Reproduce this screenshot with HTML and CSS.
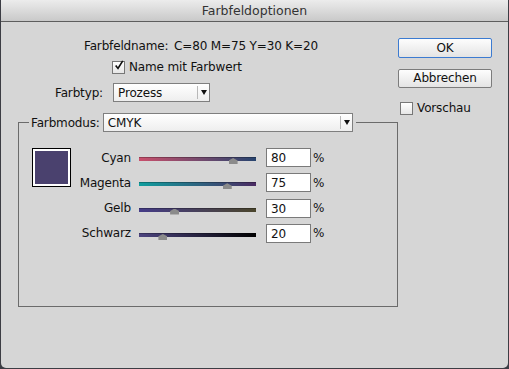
FILE: index.html
```html
<!DOCTYPE html>
<html lang="de">
<head>
    <meta charset="UTF-8">
    <title>Farbfeldoptionen</title>
    <link rel="stylesheet" href="styles.css">
</head>
<body>
    <div class="window">
        <div class="titlebar">Farbfeldoptionen</div>
        <div class="content">
            <div class="main">
                <div class="swatch-name">Farbfeldname: <span class="name-value">C=80 M=75 Y=30 K=20</span></div>
                <div class="check-row">
                    <span class="checkbox">
                        <svg width="12" height="13" viewBox="0 0 12 13"><path d="M2 6.5 L4.8 10 L10.5 1" fill="none" stroke="#111" stroke-width="2"/></svg>
                    </span>
                    Name mit Farbwert
                </div>
                <div class="type-row">
                    <span class="type-label">Farbtyp:</span>
                    <div class="select select-type">
                        <span class="select-text">Prozess</span>
                        <span class="select-arrow"></span>
                    </div>
                </div>
                <fieldset class="mode-group">
                    <legend class="mode-legend">
                        <span>Farbmodus:</span>
                        <div class="select select-mode">
                            <span class="select-text">CMYK</span>
                            <span class="select-arrow"></span>
                        </div>
                    </legend>
                    <div class="mode-body">
                        <div class="color-swatch"></div>
                        <div class="channels">
                            <span class="channel-label">Cyan</span>
                            <div class="track track-cyan"><span class="thumb" style="left: 80%"></span></div>
                            <div class="value">80</div>
                            <span class="unit">%</span>

                            <span class="channel-label">Magenta</span>
                            <div class="track track-magenta"><span class="thumb" style="left: 75%"></span></div>
                            <div class="value">75</div>
                            <span class="unit">%</span>

                            <span class="channel-label">Gelb</span>
                            <div class="track track-gelb"><span class="thumb" style="left: 30%"></span></div>
                            <div class="value">30</div>
                            <span class="unit">%</span>

                            <span class="channel-label">Schwarz</span>
                            <div class="track track-schwarz"><span class="thumb" style="left: 20%"></span></div>
                            <div class="value">20</div>
                            <span class="unit">%</span>
                        </div>
                    </div>
                </fieldset>
            </div>
            <div class="side">
                <div class="btn btn-default">OK</div>
                <div class="btn">Abbrechen</div>
                <div class="check-row preview-row">
                    <span class="checkbox"></span>
                    Vorschau
                </div>
            </div>
        </div>
    </div>
</body>
</html>
```

FILE: styles.css
```css
body {
    margin: 0;
    background: #3c3d44;
    font-family: "DejaVu Sans", sans-serif;
    font-size: 12px;
    letter-spacing: -0.15px;
    color: #111;
}

.window {
    width: 507px;
    height: 368px;
    margin-left: 1px;
    background: #d6d6d6;
    border-radius: 0 0 5px 5px;
    overflow: hidden;
}

.titlebar {
    height: 21px;
    line-height: 22px;
    text-align: center;
    font-size: 12.5px;
    letter-spacing: 0;
    color: #333;
    background: linear-gradient(#ececec, #c9c9c9);
    border-bottom: 1px solid #5e5e5e;
}

.content {
    display: flex;
}

.main {
    width: 397px;
    padding-top: 17px;
}

.swatch-name {
    padding-left: 83px;
    line-height: 14px;
}

.name-value {
    margin-left: 2px;
}

.check-row {
    display: flex;
    align-items: center;
    gap: 4px;
    margin-top: 7px;
    padding-left: 111px;
    line-height: 14px;
}

.checkbox {
    width: 11px;
    height: 11px;
    border: 1px solid #777;
    background: linear-gradient(#fff, #e6e6e6);
    display: flex;
    align-items: center;
    justify-content: center;
}

.checkbox svg {
    margin-top: -3px;
    margin-left: 1px;
}

.type-row {
    display: flex;
    align-items: center;
    margin-top: 9px;
}

.type-label {
    width: 102px;
    text-align: right;
    margin-right: 10px;
}

.select {
    display: flex;
    align-items: center;
    height: 17px;
    border: 1px solid #7f7f7f;
    background: linear-gradient(#fff, #eeeeee);
    box-sizing: content-box;
}

.select-type {
    width: 95px;
}

.select-mode {
    width: 248px;
    margin-left: 3px;
}

.select-text {
    flex: 1;
    padding-left: 4px;
}

.select-arrow {
    width: 11px;
    height: 13px;
    border-left: 1px solid #b8b8b8;
    display: flex;
    align-items: center;
    justify-content: center;
}

.select-arrow::after {
    content: "";
    border-left: 3.5px solid transparent;
    border-right: 3.5px solid transparent;
    border-top: 5px solid #111;
    margin-left: 1px;
}

.mode-group {
    margin: 11px 0 0 17px;
    padding: 0;
    width: 378px;
    height: 192px;
    border: 1px solid #6b6b6b;
    box-sizing: content-box;
}

.mode-legend {
    display: flex;
    align-items: center;
    margin-left: 10px;
    padding: 0 3px 0 2px;
}

.mode-body {
    display: flex;
    align-items: flex-start;
    padding: 16px 0 0 13px;
}

.color-swatch {
    width: 39px;
    height: 39px;
    box-sizing: border-box;
    background: #4a416e;
    border: 1px solid #000;
    box-shadow: inset 0 0 0 2px #fff;
}

.channels {
    display: grid;
    grid-template-columns: 60px 117px 45px auto;
    grid-auto-rows: 19px;
    row-gap: 6.3px;
    column-gap: 8px;
    align-items: center;
}

.channel-label {
    text-align: right;
}

.track {
    position: relative;
    width: 117px;
    height: 4px;
    margin-top: 3px;
    box-shadow: inset 0 1px 0 rgba(0, 0, 0, 0.25);
}

.track-cyan {
    background: linear-gradient(to right, #c9506c, #27446f);
}

.track-magenta {
    background: linear-gradient(to right, #0f9e9e, #4b2a62);
}

.track-gelb {
    background: linear-gradient(to right, #453c88, #4a452c);
}

.track-schwarz {
    background: linear-gradient(to right, #4d4580, #000);
}

.thumb {
    position: absolute;
    top: 1px;
    width: 9px;
    height: 6px;
    margin-left: -4px;
    background: #8b8b8b;
    clip-path: polygon(50% 0, 100% 40%, 100% 100%, 0 100%, 0 40%);
}

.value {
    height: 19px;
    line-height: 18px;
    border: 1px solid #7a7a7a;
    background: #fff;
    padding-left: 4px;
    margin-left: 2px;
    width: 45px;
    box-sizing: border-box;
}

.unit {
    margin-left: -4px;
}

.side {
    display: flex;
    flex-direction: column;
    padding-top: 16px;
    width: 95px;
}

.btn {
    height: 17px;
    width: 92px;
    line-height: 17px;
    text-align: center;
    border: 1px solid #7c7c7c;
    border-radius: 2px;
    background: linear-gradient(#fdfdfd, #e4e4e4);
    margin-bottom: 11px;
}

.btn-default {
    height: 18px;
    line-height: 18px;
    border-color: #3c7bd1;
}

.preview-row {
    margin-top: 2px;
    padding-left: 2px;
}
```
